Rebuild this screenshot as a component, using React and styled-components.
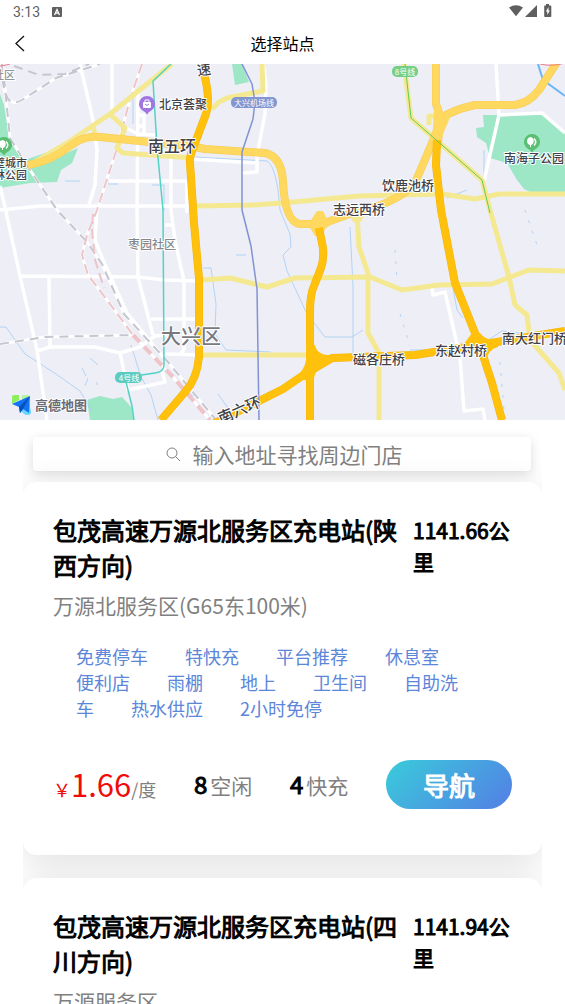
import React from 'react'
import styled, { createGlobalStyle, css } from 'styled-components'

const GlobalStyle = createGlobalStyle`
	* {
		box-sizing: border-box;
	}

	body {
		margin: 0;
		background: #fff;
		color: #000;
		font-family: 'Noto Sans CJK SC', 'Noto Sans', sans-serif;
	}
`

const heavy = css`
	font-weight: 400;
	-webkit-text-stroke: 1px currentColor;
`

const Page = styled.div`
	display: flex;
	flex-direction: column;
	height: 100vh;
	overflow: hidden;
`

const StatusBar = styled.div`
	display: flex;
	align-items: center;
	justify-content: space-between;
	height: 24px;
	padding: 0 12px 0 13px;
	flex-shrink: 0;
	color: #5f5f5f;
	font: 14px Roboto, sans-serif;
`

const StatusGroup = styled.div`
	display: flex;
	align-items: center;
	gap: ${({ $gap }) => $gap}px;
`

const Header = styled.header`
	display: grid;
	grid-template-columns: 40px 1fr 40px;
	align-items: center;
	height: 38px;
	margin-bottom: 2px;
	flex-shrink: 0;
`

const BackButton = styled.button`
	display: flex;
	padding: 0 0 0 14px;
	border: 0;
	background: none;
	cursor: pointer;
`

const PageTitle = styled.h1`
	margin: 0;
	font-size: 16px;
	font-weight: 400;
	line-height: 22px;
	text-align: center;
`

const MapArea = styled.svg`
	display: block;
	width: 100%;
	height: 356px;
	flex-shrink: 0;
	background: #edeef6;
`

const Roads = styled.g`
	fill: none;
	stroke: ${({ $color }) => $color};
	stroke-width: ${({ $width }) => $width};
	stroke-linejoin: round;
	stroke-dasharray: ${({ $dash }) => $dash || 'none'};
`

const Place = styled.text`
	fill: ${({ $color }) => $color || '#3f4148'};
	stroke: #fff;
	stroke-width: 2px;
	stroke-linejoin: round;
	paint-order: stroke;
	font-size: ${({ $size }) => $size || 12}px;
	font-weight: ${({ $weight }) => $weight || 500};
`

const LineLabel = styled.text`
	fill: #fff;
	font-size: ${({ $size }) => $size || 8}px;
	text-anchor: middle;
`

const List = styled.main`
	flex: 1;
	min-height: 0;
	margin: 0 23px;
	overflow: hidden auto;
	scrollbar-width: none;
`

const Search = styled.label`
	display: flex;
	align-items: center;
	justify-content: center;
	gap: 12px;
	height: 34px;
	margin: 17px 11px 11px 10px;
	padding-left: 4px;
	border-radius: 4px;
	background: #fff;
	box-shadow: 0 3px 12px rgba(0, 0, 0, 0.14);
`

const SearchInput = styled.input`
	width: 10em;
	padding: 0;
	border: 0;
	outline: 0;
	background: none;
	color: #000;
	font: inherit;
	font-size: 21px;
	line-height: 30px;

	&::placeholder {
		color: #808080;
		opacity: 1;
	}
`

const Card = styled.article`
	margin-bottom: 23px;
	padding: 30px 30px 46px;
	border-radius: 14px;
	background: #fff;
	box-shadow: 0 8px 36px rgba(0, 0, 0, 0.12);
`

const CardHead = styled.div`
	display: flex;
	justify-content: space-between;
	gap: 12px;
`

const StationName = styled.h2`
	${heavy}
	flex: 1;
	margin: 0;
	font-size: 24px;
	line-height: 35px;
`

const Distance = styled.p`
	${heavy}
	width: 99px;
	margin: 3px 0 0;
	font-size: 21px;
	line-height: 31px;
`

const Address = styled.p`
	margin: 8px 0 0;
	color: #808080;
	font-size: 21px;
	line-height: 31px;
`

const Tags = styled.div`
	margin-top: 22px;
	padding: 0 30px 0 23px;
	color: #5b86d9;
	font-size: 18px;
	line-height: 26px;
`

const Tag = styled.span`
	margin-right: 37px;
`

const CardFoot = styled.div`
	display: flex;
	align-items: center;
	justify-content: space-between;
	margin-top: 39px;
`

const Price = styled.p`
	margin: 0;
	padding-top: 4px;
	color: #f00a0a;
	font-size: 18px;
	line-height: 40px;
	white-space: nowrap;
`

const Amount = styled.span`
	font-size: 31px;
`

const Unit = styled.span`
	color: #808080;
	font-size: ${({ $size }) => $size}px;
`

const Count = styled.p`
	display: flex;
	align-items: baseline;
	gap: 3px;
	margin: 0;
	line-height: 40px;
`

const CountValue = styled.strong`
	${heavy}
	font-size: 24px;
`

const NavButton = styled.button`
	${heavy}
	width: 126px;
	height: 49px;
	padding: 0;
	border: 0;
	border-radius: 25px;
	background: linear-gradient(135deg, #3cc4dc 10%, #5186e4 90%);
	color: #fff;
	font-family: inherit;
	font-size: 26px;
	cursor: pointer;
`

const tags = [
	'免费停车',
	'特快充',
	'平台推荐',
	'休息室',
	'便利店',
	'雨棚',
	'地上',
	'卫生间',
	'自助洗车',
	'热水供应',
	'2小时免停'
]

const stations = [
	{
		name: '包茂高速万源北服务区充电站(陕西方向)',
		distance: '1141.66公里',
		address: '万源北服务区(G65东100米)',
		price: '1.66',
		idle: 8,
		fast: 4
	},
	{
		name: '包茂高速万源北服务区充电站(四川方向)',
		distance: '1141.94公里',
		address: '万源服务区',
		price: '1.66',
		idle: 8,
		fast: 4
	}
]

const StatusIcons = () => (
	<svg width="44" height="16" viewBox="509 4 44 16" fill="#5f5f5f" aria-hidden="true">
		<path d="M509 7.500q7-4.500 14 0L516 16.300z" />
		<path d="M537 5v12h-12z" />
		<path d="M544.500 5.500h1.500V4h3v1.500h1.500q.8 0 .8.8v9.900q0 .8-.8.8h-5.500q-.8 0-.8-.8V6.300q0-.8.3-.8z" />
		<path d="M548.500 7l-2.700 4.500h1.500V15l2.600-4.600h-1.400z" fill="#fff" />
	</svg>
)

const Pin = ({ x, y, color, children }) => (
	<g transform={`translate(${x} ${y})`}>
		<path d="M-8 0a8 8 0 1 1 16 0c0 4-3.500 6.800-6 8l-2 2.500-2-2.500c-2.500-1.200-6-4-6-8z" fill={color} />
		{children}
	</g>
)

const Trees = () => (
	<g>
		<path d="M-1.500-5c-4.500.5-4.500 7.500-.5 8v2h1v-2c3.500-.5 4-7.500-.5-8z" fill="#fff" />
		<path d="M2-3.500q3.500 3.500 0 7" fill="none" stroke="#fff" strokeWidth="1.500" />
	</g>
)

const StationMap = () => (
	<MapArea viewBox="0 64 565 356" preserveAspectRatio="xMidYMid slice" role="img" aria-label="地图">
		<g fill="#9de6c6">
			<path d="M0 94L4 105L8 130L16 150L25 160L45 153L62 155L78 148L72 163L61 170L57 182L30 183L0 188z" />
			<path d="M232 64h10l7 18-14 3z" />
			<path d="M483 115h16l43-2 23 20v59h-35l-6-3-7-9-10-17-17-5-4-15-9-6-1-9 8-1z" />
			<path d="M87 400l13-4 13 3 9-2 10 11 2 12H90z" />
		</g>

		<Roads $color="#a3cdf6" $width={0.8}>
			<path d="M0 327h6l19 27 31 20 24 17 12 20M131 345l10 32 10 18 7 25M203 268h8l5 36-1 30 11 16 45 2" />
			<path d="M194 157l73 4q10 6 13 49l10 24 1 13-8 8 4 16 20 43 18 23h27l11-7" />
			<path d="M350 227l3 59v68" />
			<path d="M395 250l2 30M400 314l10 32M525 210l12 35M500 362l4 48" strokeDasharray="3 8" />
			<path d="M453 288l4 22 6 8M484 150v28M410 350h24l40-6M488 340l14-9 18 2" />
			<path d="M538 64l5 16 22 16" stroke="#69b5fa" strokeWidth="2" />
			<path d="M65 181h15M108 184h10M152 185h12v26M236 255h10M133 98v26M447 198l20-8" />
			<path d="M90 358l8 7M82 368l4 8M88 378l-3 8M97 382v3M188 394l9 2M218 394l12 17" />
		</Roads>

		<Roads $color="#fff" $width={3.5}>
			<path d="M80 64l13 56 4 30-2 35-7 23M112 64v48M138 90l-1 120 1 67 15 58M109 181h78v32M171 156v54l4 30 6 28 3 12v70" />
			<path d="M0 210l40-4h150M0 186l5 21 15 69 17 74 10 70M20 276l118 1 27 3 34 1" />
			<path d="M49 277l1 70M37 351l13-4h45l25 6 20-6 15-11 12-1M120 353l8 37 37-8-3-12" />
			<path d="M97 210l-2 30 8 20 24 53 36 44M165 354l39 1M151 319h49M172 225h-7M184 350l-3 3" />
			<path d="M138 115h6v18M137 126h7M124 127l14 7 17 1M258 150l7-36 1-30-3-20M257 150v22l-14 1M190 159l67 4" />
			<path d="M496 64l3 51-15 66M499 115l43-2 23 20M432 288l1 7 12-3 15 65 4 54 19-2 2 11" />
		</Roads>

		<Roads $color="#fff" $width={3}>
			<path d="M2 64q0 48 20 36l34-22 44-14M4 78l6 60 16 26 31 46 30 32 15 22 22 50 44 48 48 58M0 344l45-7 90-2" />
			<path d="M142 64l-12 35-12 46-21 65-10 25-5 20 6 20 19 25 26 35 40 42 37 43" />
		</Roads>
		<Roads $color="#c5c6cf" $width={2} $dash="9 6">
			<path d="M2 64q0 48 20 36l34-22 44-14M14 66l25 9 26-1 24-10M4 78l6 60 16 26 31 46 30 32 15 22 22 50 44 48 48 58M0 344l45-7 90-2" />
		</Roads>
		<Roads $color="#eec4c8" $width={2} $dash="10 5">
			<path d="M142 64l-12 35-12 46-21 65-10 25-5 20 6 20 19 25 26 35" />
			<path d="M93 214l-1 16 3 30 9 28" />
		</Roads>
		<Roads $color="#eec4c8" $width={4} $dash="10 6">
			<path d="M133 335l40 42 37 43" />
		</Roads>

		<Roads $color="#f4e991" $width={5}>
			<path d="M172 64l-35 28-27 22-43 29-34 20M110 114l15 14-8 20 6 5 70 5M93 123l2 14" />
			<path d="M262 64l1 27-36 7-8 4-7 7M195 206l58-1 29-2 77-7 83-2 33 5 24-5h66" />
			<path d="M202 280l28-2 37 9 28-9 75-1 32 13 37-5 53-1 37-14 36 1M203 355h107" />
			<path d="M357 215l2 32 9 26v60l11 20v67" />
			<path d="M404 64l7 54 71 62 8 30 19 67 6 28 12 10 3 25 29 33 6 17M429 125v-9h12" />
		</Roads>
		<circle cx="357" cy="217" r="6" fill="#f4e991" />

		<Roads $color="#f3cb58" $width={8}>
			<path d="M28 165q22-3 42-19 14-11 30-9l90 9 15 3 60 4q17 4 18 29 2 40 17 42h22l30-11q45-9 63-30l17-40 10-25q10-8 33-13h40q14-2 24-15l18-28M436 64v40l5 14-4 30" />
		</Roads>
		<Roads $color="#ffd85f" $width={7}>
			<path d="M28 165q22-3 42-19 14-11 30-9l90 9 15 3 60 4q17 4 18 29 2 40 17 42h22l30-11q45-9 63-30l17-40 10-25q10-8 33-13h40q14-2 24-15l18-28M436 64v40l5 14-4 30" />
		</Roads>
		<path d="M434 110q4 7 17 5l-10 24q0 5-9 5zM311 220l6-9h6l4 8 10 2-11 7-5 8h-6l-6-10z" fill="#ffd85f" />

		<Roads $color="#f4b512" $width={8}>
			<path d="M204 74l2 8q4 20 0 32l-11 29q-6 14-5 20l4 60 5 55v79q-2 22-14 35l-24 28M319 228l4 20q1 12-2 20l-7 18q-4 8-4 27v107" />
			<path d="M213 424l70-35 22-15 27-16 83-3 64-10 30-5 56-9M437 140l-1 25 5 45 14 73 24 60 13 40 10 37" />
		</Roads>
		<Roads $color="#ffc10b" $width={7}>
			<path d="M204 74l2 8q4 20 0 32l-11 29q-6 14-5 20l4 60 5 55v79q-2 22-14 35l-24 28M319 228l4 20q1 12-2 20l-7 18q-4 8-4 27v107" />
			<path d="M213 424l70-35 22-15 27-16 83-3 64-10 30-5 56-9M437 140l-1 25 5 45 14 73 24 60 13 40 10 37" />
		</Roads>
		<path d="M306 345h9q2 11 18 10v6q-16 2-19 17l-7 6q0-7-14-4 12-10 13-20zM472 333h8q7 9 18 6v8q-10 2-13 16l-10-13q-4-3-14-2z" fill="#ffc10b" />

		<Roads $color="#53d3c4" $width={1.5}>
			<path d="M171 64l-18 17 4 66 6 63 1 155q0 7-9 8l-27 4-2 5 6 24 2 14" />
		</Roads>
		<Roads $color="#8193d2" $width={1.5}>
			<path d="M242 64l10 20 3 18-2 17-11 33v58l9 36 6 43 2 131" />
		</Roads>
		<Roads $color="#62c95f" $width={1}>
			<path d="M405 64l6 54 71 62 8 33" />
		</Roads>
		<path d="M0 66q8-1 10-2M540 64q12 3 25-1" fill="none" stroke="#ee7c8b" />

		<rect x="231" y="97" width="46" height="11" rx="5" fill="#8396cf" />
		<LineLabel x="254" y="106">大兴机场线</LineLabel>
		<rect x="392" y="66" width="26" height="11" rx="5" fill="#74cf84" />
		<LineLabel x="405" y="75">8号线</LineLabel>
		<rect x="115" y="372" width="27" height="11" rx="5" fill="#5dccc0" />
		<LineLabel x="129" y="381">4号线</LineLabel>

		<Place x="-7" y="79" $color="#92949a" $size={11}>社区</Place>
		<Place x="197" y="75" $size={14} transform="rotate(-8 203 70)">速</Place>
		<Place x="159" y="109">北京荟聚</Place>
		<Place x="148" y="152" $size={16}>南五环</Place>
		<Place x="-6" y="167" $size={11}>壁城市</Place>
		<Place x="-6" y="179" $size={11}>林公园</Place>
		<Place x="504" y="163">南海子公园</Place>
		<Place x="382" y="190" $size={13}>饮鹿池桥</Place>
		<Place x="333" y="214" $size={13}>志远西桥</Place>
		<Place x="128" y="249" $color="#85878d">枣园社区</Place>
		<Place x="161" y="344" $color="#77797f" $size={20}>大兴区</Place>
		<Place x="353" y="364" $size={13}>磁各庄桥</Place>
		<Place x="435" y="355" $size={13}>东赵村桥</Place>
		<Place x="502" y="343" $size={13}>南大红门桥</Place>
		<Place x="221" y="424" $size={15} transform="rotate(-24 221 424)">南六环</Place>

		<Pin x={147} y={104} color="#a175e2">
			<rect x="-4" y="-2" width="8" height="6" rx="1" fill="#fff" />
			<path d="M-2-1v-3h4v3" fill="none" stroke="#fff" />
			<path d="M-2 0q2 3 4 0" fill="none" stroke="#a175e2" />
		</Pin>
		<Pin x={532} y={142} color="#5abf73">
			<Trees />
		</Pin>
		<Pin x={4} y={145} color="#5abf73">
			<Trees />
		</Pin>

		<path d="M12 397q0-2 2-2h5v5l-7 4z" fill="#8cf05c" />
		<path d="M22 395h5q2 0 2 2l-7 3z" fill="#b4f59a" />
		<path d="M29 402l2 10q0 3-3 3-5 0-7-5z" fill="#67d8fd" />
		<path d="M30 396l-18 8 7 3 1 6 3-4 6 4z" fill="#1173f5" />
		<path d="M30 396l-11 11 1 6 3-4z" fill="#0751bb" />
		<Place x="35" y="410" $size={13} $weight={700} $color="#696b76">高德地图</Place>
	</MapArea>
)

const Station = ({ name, distance, address, price, idle, fast }) => (
	<Card>
		<CardHead>
			<StationName>{name}</StationName>
			<Distance>{distance}</Distance>
		</CardHead>
		<Address>{address}</Address>
		<Tags>
			{tags.map(tag => (
				<Tag key={tag}>{tag}</Tag>
			))}
		</Tags>
		<CardFoot>
			<Price>
				{'\uffe5'}
				<Amount>{price}</Amount>
				<Unit $size={18}>/度</Unit>
			</Price>
			<Count>
				<CountValue>{idle}</CountValue>
				<Unit $size={21}>空闲</Unit>
			</Count>
			<Count>
				<CountValue>{fast}</CountValue>
				<Unit $size={21}>快充</Unit>
			</Count>
			<NavButton type="button">导航</NavButton>
		</CardFoot>
	</Card>
)

const App = () => (
	<Page>
		<GlobalStyle />
		<StatusBar>
			<StatusGroup $gap={12}>
				<span>3:13</span>
				<svg width="10" height="10" viewBox="0 0 10 10" aria-hidden="true">
					<rect width="10" height="10" rx="1" fill="#5f5f5f" />
					<path d="M2.500 8L5 2.500 7.500 8M3.500 6.200h3" fill="none" stroke="#fff" strokeWidth="1.300" />
				</svg>
			</StatusGroup>
			<StatusIcons />
		</StatusBar>
		<Header>
			<BackButton type="button" aria-label="返回">
				<svg width="11" height="17" viewBox="0 0 11 17" fill="none" stroke="#111" strokeWidth="1.300">
					<path d="M10 1L2 8.500 10 16" />
				</svg>
			</BackButton>
			<PageTitle>选择站点</PageTitle>
		</Header>
		<StationMap />
		<List>
			<Search>
				<svg width="15" height="15" viewBox="0 0 15 15" fill="none" stroke="#808080" aria-hidden="true">
					<circle cx="6" cy="6" r="5" />
					<path d="M9.500 9.500L14 14" />
				</svg>
				<SearchInput type="text" aria-label="输入地址寻找周边门店" placeholder="输入地址寻找周边门店" />
			</Search>
			{stations.map(station => (
				<Station key={station.name} {...station} />
			))}
		</List>
	</Page>
)

export default App
